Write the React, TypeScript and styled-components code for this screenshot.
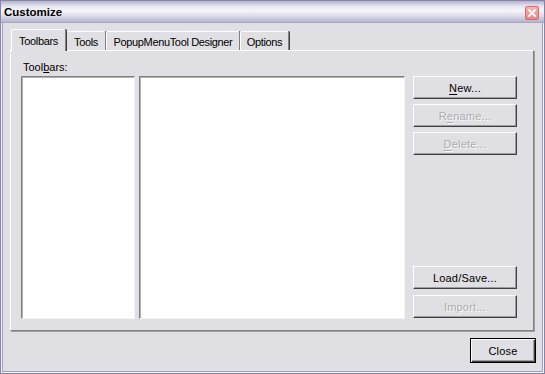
import React from "react";
import styled, { createGlobalStyle } from "styled-components";

const GlobalStyle = createGlobalStyle`
  html, body {
    margin: 0;
    padding: 0;
    background: #e0dfe3;
  }
  body {
    font-family: "Liberation Sans", Arial, sans-serif;
    font-size: 11px;
    color: #000;
  }
`;

const Window = styled.div`
  width: 545px;
  height: 374px;
  box-sizing: border-box;
  display: flex;
  flex-direction: column;
  background: #e0dfe3;
  border: 1px solid #8583a6;
  box-shadow: inset 0 0 0 1px #f4f4f8, inset 0 0 0 2px #a3a1bf;
`;

const TitleBar = styled.div`
  height: 21px;
  flex-shrink: 0;
  display: flex;
  align-items: center;
  justify-content: space-between;
  padding: 0 5px 0 3px;
  background: linear-gradient(
    to bottom,
    #b3b1cf 0%,
    #e6e6f0 25%,
    #f5f5f9 45%,
    #dedde9 70%,
    #b6b4cf 100%
  );
  border-bottom: 1px solid #a8a7c0;
`;

const Title = styled.span`
  font-weight: bold;
  font-size: 11.5px;
`;

const CloseBox = styled.div`
  width: 12px;
  height: 12px;
  margin-top: 2px;
  border: 1px solid #d46a6a;
  border-radius: 2px;
  background: linear-gradient(to bottom, #f7b4b4, #e88787);
  display: flex;
  align-items: center;
  justify-content: center;
`;

const Body = styled.div`
  flex: 1;
  display: flex;
  flex-direction: column;
  padding: 7px 8px 0 9px;
`;

const TabStrip = styled.div`
  display: flex;
  align-items: flex-end;
  height: 21px;
  margin-bottom: -1px;
  position: relative;
  z-index: 1;
`;

const Tab = styled.div<{ $active?: boolean; $w: number }>`
  box-sizing: border-box;
  width: ${(p) => p.$w}px;
  height: ${(p) => (p.$active ? "22px" : "19px")};
  margin: ${(p) => (p.$active ? "0 0 0 1px" : "0 0 1px 0")};
  padding-top: ${(p) => (p.$active ? "0" : "1px")};
  display: flex;
  align-items: center;
  justify-content: center;
  letter-spacing: -0.35px;
  background: #e0dfe3;
  border-top: 1px solid #ffffff;
  border-left: 1px solid #ffffff;
  border-right: 1px solid #808080;
  box-shadow: 1px 0 0 #404040;
  border-radius: 2px 2px 0 0;
  position: relative;
  z-index: ${(p) => (p.$active ? 2 : 1)};
`;

const Panel = styled.div`
  box-sizing: border-box;
  width: 524px;
  height: 281px;
  border-top: 1px solid #ffffff;
  border-left: 1px solid #ffffff;
  border-right: 1px solid #808080;
  border-bottom: 1px solid #808080;
  box-shadow: 1px 1px 0 #a0a0a0;
  padding: 10px 16px 11px 10px;
  display: flex;
  flex-direction: column;
`;

const Label = styled.div`
  height: 13px;
  line-height: 13px;
  margin: 0 0 2px 2px;
`;

const Content = styled.div`
  display: flex;
  height: 243px;
`;

const ListBox = styled.div<{ $w: number; $gap: number }>`
  box-sizing: border-box;
  width: ${(p) => p.$w}px;
  height: 100%;
  margin-right: ${(p) => p.$gap}px;
  background: #ffffff;
  border-top: 1px solid #808080;
  border-left: 1px solid #808080;
  border-right: 1px solid #f4f4f4;
  border-bottom: 1px solid #f4f4f4;
  box-shadow: inset 1px 1px 0 #b0b0b0;
`;

const ButtonColumn = styled.div`
  width: 104px;
  display: flex;
  flex-direction: column;
  justify-content: space-between;
`;

const ButtonGroup = styled.div<{ $gap: number; $bottom?: number }>`
  display: flex;
  flex-direction: column;
  gap: ${(p) => p.$gap}px;
  margin-bottom: ${(p) => p.$bottom ?? 0}px;
`;

const Button = styled.button<{ $disabled?: boolean }>`
  box-sizing: border-box;
  width: 100%;
  height: 23px;
  padding: 0;
  margin: 0;
  font: inherit;
  letter-spacing: 0.2px;
  background: #e0dfe3;
  color: ${(p) => (p.$disabled ? "#adacb0" : "#000")};
  text-shadow: ${(p) => (p.$disabled ? "1px 1px 0 #f8f8f8" : "none")};
  border-top: 1px solid #ffffff;
  border-left: 1px solid #ffffff;
  border-right: 1px solid #404040;
  border-bottom: 1px solid #404040;
  box-shadow: inset -1px -1px 0 #9d9da1;
  cursor: default;
  u {
    text-underline-offset: 2px;
  }
`;

const Footer = styled.div`
  display: flex;
  justify-content: flex-end;
  padding-top: 7px;
`;

const DefaultButton = styled(Button)`
  width: 66px;
  height: 25px;
  border: 1px solid #000;
  box-shadow: inset 1px 1px 0 #ffffff, inset -1px -1px 0 #404040,
    inset -2px -2px 0 #9d9da1;
`;

export default function App() {
  return (
    <>
      <GlobalStyle />
      <Window>
        <TitleBar>
          <Title>Customize</Title>
          <CloseBox>
            <svg width="8" height="8" viewBox="0 0 8 8">
              <path
                d="M1 1 L7 7 M7 1 L1 7"
                stroke="#ffffff"
                strokeWidth="1.8"
                strokeLinecap="square"
              />
            </svg>
          </CloseBox>
        </TitleBar>
        <Body>
          <TabStrip>
            <Tab $active $w={55}>
              Toolbars
            </Tab>
            <Tab $w={40}>Tools</Tab>
            <Tab $w={134}>PopupMenuTool Designer</Tab>
            <Tab $w={49}>Options</Tab>
          </TabStrip>
          <Panel>
            <Label>
              Tool<u>b</u>ars:
            </Label>
            <Content>
              <ListBox $w={114} $gap={4} />
              <ListBox $w={266} $gap={8} />
              <ButtonColumn>
                <ButtonGroup $gap={5}>
                  <Button>
                    <u>N</u>ew...
                  </Button>
                  <Button $disabled>
                    R<u>e</u>name...
                  </Button>
                  <Button $disabled>
                    <u>D</u>elete...
                  </Button>
                </ButtonGroup>
                <ButtonGroup $gap={6} $bottom={1}>
                  <Button>Load/Save...</Button>
                  <Button $disabled>Import...</Button>
                </ButtonGroup>
              </ButtonColumn>
            </Content>
          </Panel>
          <Footer>
            <DefaultButton>Close</DefaultButton>
          </Footer>
        </Body>
      </Window>
    </>
  );
}
